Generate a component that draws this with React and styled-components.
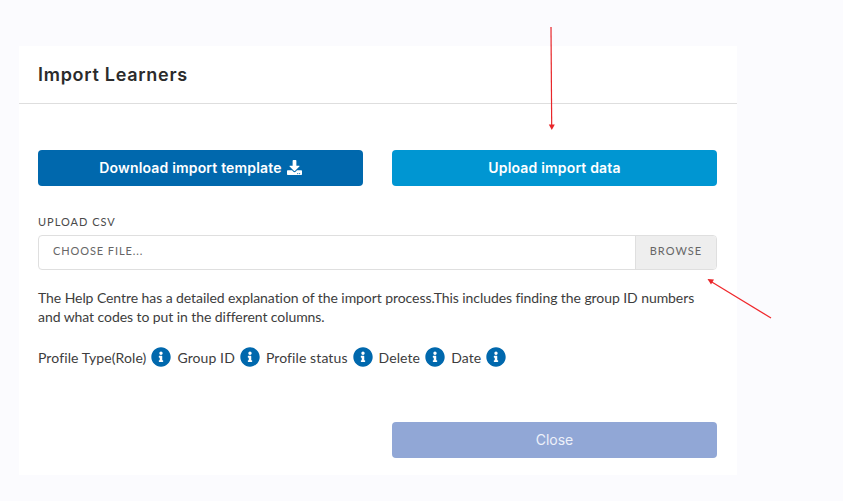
import React from "react";
import styled, { createGlobalStyle } from "styled-components";
import { FaDownload, FaInfoCircle } from "react-icons/fa";

const Global = createGlobalStyle`
  html, body { margin: 0; padding: 0; background: #fbfbfe; }
  body { font-family: "Lato", "Liberation Sans", sans-serif; }
  * { box-sizing: border-box; }
`;

const Page = styled.div`
  position: relative;
  width: 843px;
  height: 501px;
  padding: 46px 106px 26px 19px;
  overflow: hidden;
`;

const Modal = styled.section`
  height: 429px;
  background: #fff;
  display: flex;
  flex-direction: column;
`;

const Header = styled.header`
  height: 58px;
  padding: 0 19px;
  display: flex;
  align-items: center;
  border-bottom: 1px solid #dedede;
`;

const Title = styled.h2`
  margin: 0;
  font-family: "Inter", "Open Sans", sans-serif;
  font-size: 18px;
  font-weight: 600;
  letter-spacing: 0.72px;
  color: #2b2b2b;
`;

const Body = styled.div`
  flex: 1;
  padding: 46px 20px 17px 19px;
  display: flex;
  flex-direction: column;
`;

const ButtonRow = styled.div`
  display: grid;
  grid-template-columns: 325px 325px;
  justify-content: space-between;
`;

const ActionButton = styled.button`
  height: 36px;
  border: 0;
  border-radius: 4px;
  padding: 0 0 1px;
  background: ${(p) => p.$bg};
  color: ${(p) => p.$fg || "#fff"};
  font-family: "Inter", "Open Sans", sans-serif;
  font-size: 14px;
  font-weight: ${(p) => p.$weight || 600};
  letter-spacing: ${(p) => p.$spacing || "0.17px"};
  display: flex;
  align-items: center;
  justify-content: center;
  gap: 5px;
`;

const Label = styled.label`
  margin-top: 29px;
  font-size: 11px;
  line-height: 13px;
  letter-spacing: 1px;
  color: #4a4a4a;
`;

const FileField = styled.div`
  margin-top: 7px;
  height: 35px;
  display: flex;
  border: 1px solid #dfdfdf;
  border-radius: 4px;
  overflow: hidden;
`;

const FileName = styled.div`
  flex: 1;
  padding: 0 0 4px 14px;
  display: flex;
  align-items: center;
  font-size: 11px;
  letter-spacing: 0.9px;
  color: #666;
`;

const Browse = styled.div`
  width: 81px;
  padding-bottom: 4px;
  display: flex;
  align-items: center;
  justify-content: center;
  background: #eeeeee;
  border-left: 1px solid #dfdfdf;
  font-size: 11px;
  letter-spacing: 1.05px;
  color: #666;
`;

const Help = styled.p`
  margin: 18px 0 0;
  width: 672px;
  font-size: 14px;
  line-height: 19px;
  letter-spacing: -0.07px;
  color: #3d3d3d;
`;

const Legend = styled.div`
  margin-top: 20px;
  display: flex;
  align-items: center;
  height: 22px;
  font-size: 14px;
  letter-spacing: 0.1px;
  color: #3d3d3d;
`;

const LegendItem = styled.span`
  display: inline-flex;
  align-items: center;
  gap: 5px;
  margin-right: 6px;
`;

const Info = styled(FaInfoCircle)`
  width: 20px;
  height: 20px;
  color: #0068ad;
`;

const Footer = styled.div`
  margin-top: auto;
  display: flex;
  justify-content: flex-end;
`;

const CloseButton = styled(ActionButton)`
  width: 325px;
`;

const DownloadIcon = styled(FaDownload)`
  width: 15px;
  height: 15px;
`;

const Arrows = styled.svg`
  position: absolute;
  inset: 0;
  pointer-events: none;
`;

const items = ["Profile Type(Role)", "Group ID", "Profile status", "Delete", "Date"];

export default function App() {
  return (
    <Page>
      <Global />
      <Modal>
        <Header>
          <Title>Import Learners</Title>
        </Header>
        <Body>
          <ButtonRow>
            <ActionButton $bg="#0068ad">
              Download import template <DownloadIcon />
            </ActionButton>
            <ActionButton $bg="#0096d2">Upload import data</ActionButton>
          </ButtonRow>
          <Label>UPLOAD CSV</Label>
          <FileField>
            <FileName>CHOOSE FILE...</FileName>
            <Browse>BROWSE</Browse>
          </FileField>
          <Help>
            The Help Centre has a detailed explanation of the import process.This includes finding the group ID numbers and what codes to put in the different columns.
          </Help>
          <Legend>
            {items.map((t) => (
              <LegendItem key={t}>
                {t} <Info />
              </LegendItem>
            ))}
          </Legend>
          <Footer>
            <CloseButton $bg="#91a7d6" $fg="#edf1fa" $weight={400} $spacing="0">Close</CloseButton>
          </Footer>
        </Body>
      </Modal>
      <Arrows width="843" height="501" viewBox="0 0 843 501">
        <path d="M551 27 L551.7 126" stroke="#e8262a" strokeWidth="1.2" fill="none" />
        <path d="M548.8 124.5 L554.8 124.5 L551.8 130 Z" fill="#e8262a" />
        <path d="M771 318 L711 281.5" stroke="#f0282c" strokeWidth="1.2" fill="none" />
        <path d="M707.5 279 L714 279.5 L711 284.5 Z" fill="#e8262a" />
      </Arrows>
    </Page>
  );
}
